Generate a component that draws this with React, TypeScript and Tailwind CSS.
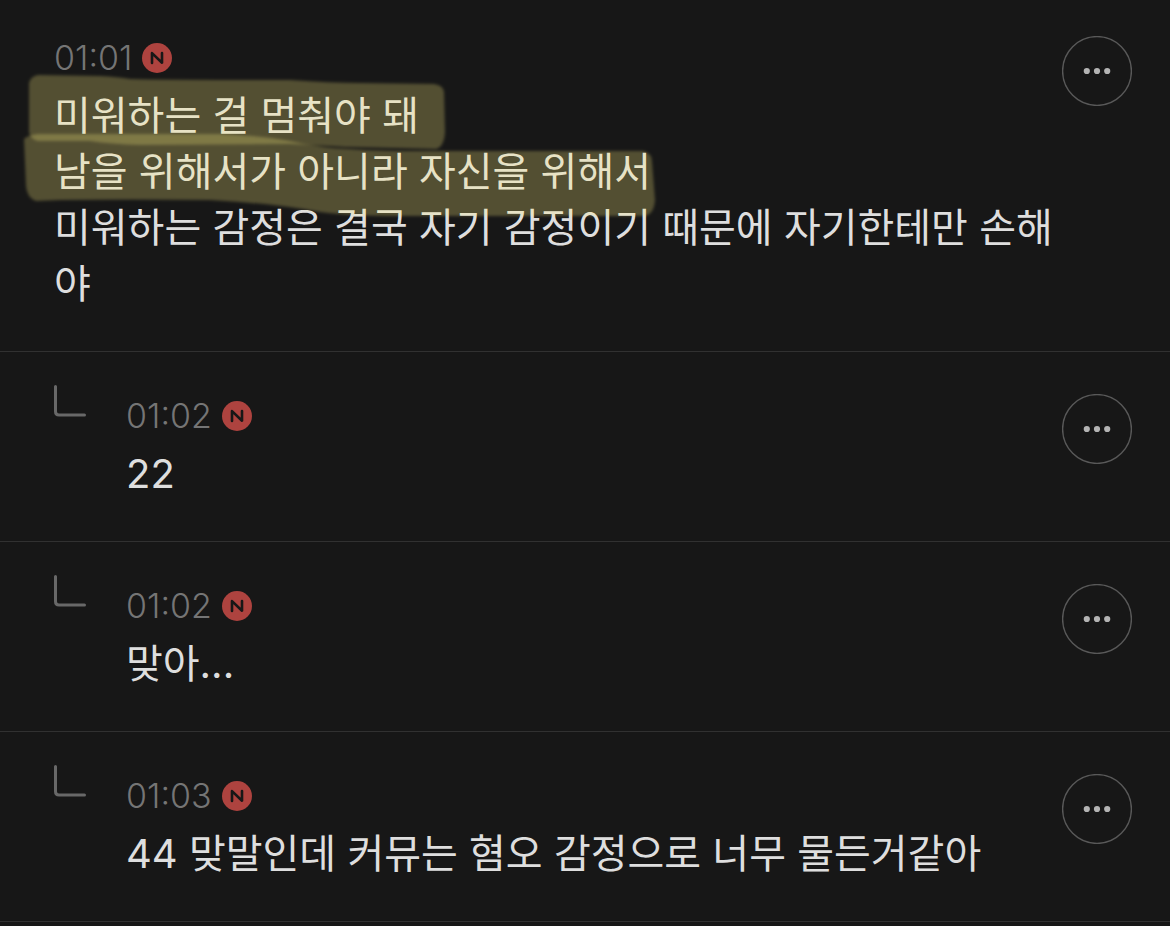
import clsx from "clsx";

interface Comment {
  id: string;
  time: string;
  lines: string[];
  reply?: boolean;
  highlighted?: boolean;
}

const comments: Comment[] = [
  {
    id: "c1",
    time: "01:01",
    lines: [
      "미워하는 걸 멈춰야 돼",
      "남을 위해서가 아니라 자신을 위해서",
      "미워하는 감정은 결국 자기 감정이기 때문에 자기한테만 손해야",
    ],
    highlighted: true,
  },
  { id: "c2", time: "01:02", lines: ["22"], reply: true },
  { id: "c3", time: "01:02", lines: ["맞아..."], reply: true },
  {
    id: "c4",
    time: "01:03",
    lines: ["44 맞말인데 커뮤는 혐오 감정으로 너무 물든거같아"],
    reply: true,
  },
];

function NewBadge() {
  return (
    <svg viewBox="0 0 30 30" className="size-[30px]" role="img" aria-label="새 댓글">
      <circle cx="15" cy="15" r="15" fill="#ae433f" />
      <path
        d="M10 19.9V10.1L20 19.7V10.1"
        fill="none"
        stroke="#171717"
        strokeWidth="2.6"
        strokeLinecap="round"
        strokeLinejoin="round"
      />
    </svg>
  );
}

function ReplyMark() {
  return (
    <svg viewBox="0 0 32 32" className="mt-[33px] size-8 shrink-0" aria-hidden="true">
      <path
        d="M1.5 1.5V26.5Q1.5 30 5 30H30.5"
        fill="none"
        stroke="#686868"
        strokeWidth="3"
        strokeLinecap="round"
      />
    </svg>
  );
}

function MoreButton() {
  return (
    <button
      type="button"
      aria-label="더보기"
      className="size-[70px] shrink-0 rounded-full hover:bg-white/5"
    >
      <svg viewBox="0 0 70 70" className="size-full" aria-hidden="true">
        <circle cx="35" cy="35" r="34.4" fill="none" stroke="#595959" strokeWidth="1.4" />
        <g fill="#b4b4b4">
          <circle cx="24.8" cy="35" r="3.1" />
          <circle cx="35" cy="35" r="3.1" />
          <circle cx="45.2" cy="35" r="3.1" />
        </g>
      </svg>
    </button>
  );
}

// Two marker strokes laid over the first two lines of the comment.
function Highlighter() {
  return (
    <svg
      viewBox="0 0 670 230"
      className="pointer-events-none absolute top-0 left-0 h-[230px] w-[670px]"
      aria-hidden="true"
    >
      <defs>
        <filter id="soft" x="-5%" y="-10%" width="110%" height="120%">
          <feGaussianBlur stdDeviation="1.7" />
        </filter>
      </defs>
      <g fill="#ffee7f" fillOpacity="0.26" filter="url(#soft)">
        <path d="M29 83Q31 76 38 75L100 76Q118 77 130 79Q170 80 290 80Q330 83 360 83L434 84Q443 85 444 92L445 132Q444 147 436 149L345 147Q310 145 290 144L140 145Q110 144 90 141L38 141Q30 139 29 132Z" />
        <path d="M24 139Q28 135 38 134L220 134Q265 136 290 141Q320 148 350 149Q380 151 420 151L643 151Q652 153 652 162L655 200Q654 214 645 216L400 216Q350 216 320 212Q270 203 210 200Q130 199 60 200L36 201Q27 198 26 186Z" />
      </g>
    </svg>
  );
}

function CommentRow({ comment }: { comment: Comment }) {
  return (
    <li className="relative flex items-start border-b border-[#313131] pr-[38px] pl-[54px]">
      {comment.reply && <ReplyMark />}
      <article
        className={clsx(
          "min-w-0 flex-1 pb-[39px]",
          comment.reply ? "pt-[42px] pl-10" : "pt-9"
        )}
      >
        <div className="flex h-11 items-center gap-2.5">
          <time className="text-[34px] leading-[44px] font-light text-[#757575]">
            {comment.time}
          </time>
          <NewBadge />
        </div>
        <div className="mt-2 text-[40px] leading-[56px] text-[#dedede]">
          {comment.lines.map((line) => (
            <p key={line}>{line}</p>
          ))}
        </div>
      </article>
      <div className={comment.reply ? "pt-[42px]" : "pt-9"}>
        <MoreButton />
      </div>
      {comment.highlighted && <Highlighter />}
    </li>
  );
}

export default function App() {
  return (
    <main
      lang="ko"
      className="min-h-screen bg-[#171717] font-['Inter','Noto_Sans_CJK_KR',sans-serif]"
    >
      <ul>
        {comments.map((comment) => (
          <CommentRow key={comment.id} comment={comment} />
        ))}
      </ul>
    </main>
  );
}
